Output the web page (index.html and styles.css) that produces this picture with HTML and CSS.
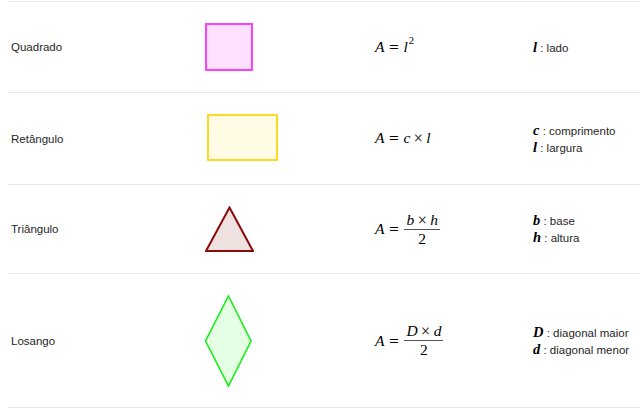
FILE: index.html
```html
<!DOCTYPE html>
<html lang="pt">
<head>
<meta charset="utf-8">
<title>Áreas</title>
<link rel="stylesheet" href="styles.css">
</head>
<body>
<table class="areas">
  <colgroup>
    <col class="c-name"><col class="c-shape"><col class="c-formula"><col class="c-vars">
  </colgroup>
  <tr>
    <td class="name">Quadrado</td>
    <td class="shape">
      <svg width="48" height="48" viewBox="0 0 48 48"><rect x="1" y="1" width="46" height="46" fill="#ffe1ff" stroke="#ff40ff" stroke-width="2"/></svg>
    </td>
    <td class="formula"><span class="math"><i>A</i><span class="rel">=</span><i>l</i><sup>2</sup></span></td>
    <td class="vars"><div><b class="v">l</b> : lado</div></td>
  </tr>
  <tr>
    <td class="name">Retângulo</td>
    <td class="shape">
      <svg class="rect" width="71" height="49" viewBox="0 0 71 49"><rect x="1" y="1" width="69" height="45" fill="#fffbe4" stroke="#ffd824" stroke-width="2"/></svg>
    </td>
    <td class="formula"><span class="math"><i>A</i><span class="rel">=</span><i>c</i><span class="bin">×</span><i>l</i></span></td>
    <td class="vars"><div><b class="v">c</b> : comprimento</div><div><b class="v">l</b> : largura</div></td>
  </tr>
  <tr>
    <td class="name">Triângulo</td>
    <td class="shape">
      <svg width="49" height="46" viewBox="0 0 49 46"><polygon points="24.5,1.5 1,45 48,45" fill="#f0e1e1" stroke="#8b0a0a" stroke-width="2" stroke-linejoin="miter"/></svg>
    </td>
    <td class="formula"><span class="math"><i>A</i><span class="rel">=</span><span class="frac"><span class="num"><i>b</i><span class="bin">×</span><i>h</i></span><span class="den">2</span></span></span></td>
    <td class="vars"><div><b class="v">b</b> : base</div><div><b class="v">h</b> : altura</div></td>
  </tr>
  <tr>
    <td class="name">Losango</td>
    <td class="shape">
      <svg class="diamond" width="49" height="92" viewBox="0 0 49 92"><polygon points="24.5,1 47,46 24.5,91 1.5,46" fill="#e5ffe5" stroke="#14f014" stroke-width="1.6"/></svg>
    </td>
    <td class="formula"><span class="math"><i>A</i><span class="rel">=</span><span class="frac wide"><span class="num"><i>D</i><span class="bin">×</span><i>d</i></span><span class="den">2</span></span></span></td>
    <td class="vars"><div><b class="v">D</b> : diagonal maior</div><div><b class="v">d</b> : diagonal menor</div></td>
  </tr>
</table>
</body>
</html>
```

FILE: styles.css
```css
html, body {
  margin: 0;
  padding: 0;
  background: #ffffff;
}

body {
  padding: 1px 0 0 8px;
  font-family: "Liberation Sans", Arial, sans-serif;
  font-size: 11.5px;
  color: #262626;
}

.areas {
  border-collapse: collapse;
  width: 632px;
  table-layout: fixed;
}

.c-name { width: 194px; }
.c-shape { width: 170px; }
.c-formula { width: 158px; }
.c-vars { width: 110px; }

.areas tr {
  border-top: 1px solid #e6e6e6;
  border-bottom: 1px solid #e6e6e6;
}

.areas td {
  padding: 21px 3px;
  vertical-align: middle;
  line-height: 16px;
}

.shape svg {
  display: block;
}

.shape .rect {
  margin-left: 2px;
}

.shape .diamond {
  margin-left: -1px;
  margin-bottom: -1px;
}

.vars {
  white-space: nowrap;
}

.math {
  display: inline-flex;
  align-items: center;
  font-family: "Liberation Serif", "Times New Roman", serif;
  font-size: 15.5px;
  color: #000000;
  white-space: nowrap;
}

.math i {
  font-style: italic;
}

.math sup {
  font-style: normal;
  font-size: 10.5px;
  line-height: 1;
  align-self: flex-start;
  margin-top: -3px;
  margin-left: 1px;
}

.rel {
  font-family: "DejaVu Serif", serif;
  font-size: 13px;
  margin: 0 4px;
}

.bin {
  font-family: "DejaVu Serif", serif;
  font-size: 12px;
  margin: 0 3px;
  color: #333333;
}

.frac {
  display: inline-flex;
  flex-direction: column;
  align-items: center;
  padding: 0 1px;
}

.frac .num {
  display: flex;
  align-items: center;
  padding: 0 2px 2px;
  border-bottom: 1px solid #555555;
  line-height: 14px;
}

.frac .den {
  font-style: normal;
  line-height: 14px;
  padding-top: 2px;
}

.v {
  font-family: "Liberation Serif", "Times New Roman", serif;
  font-style: italic;
  font-weight: bold;
  font-size: 14.5px;
  color: #000000;
}
```
